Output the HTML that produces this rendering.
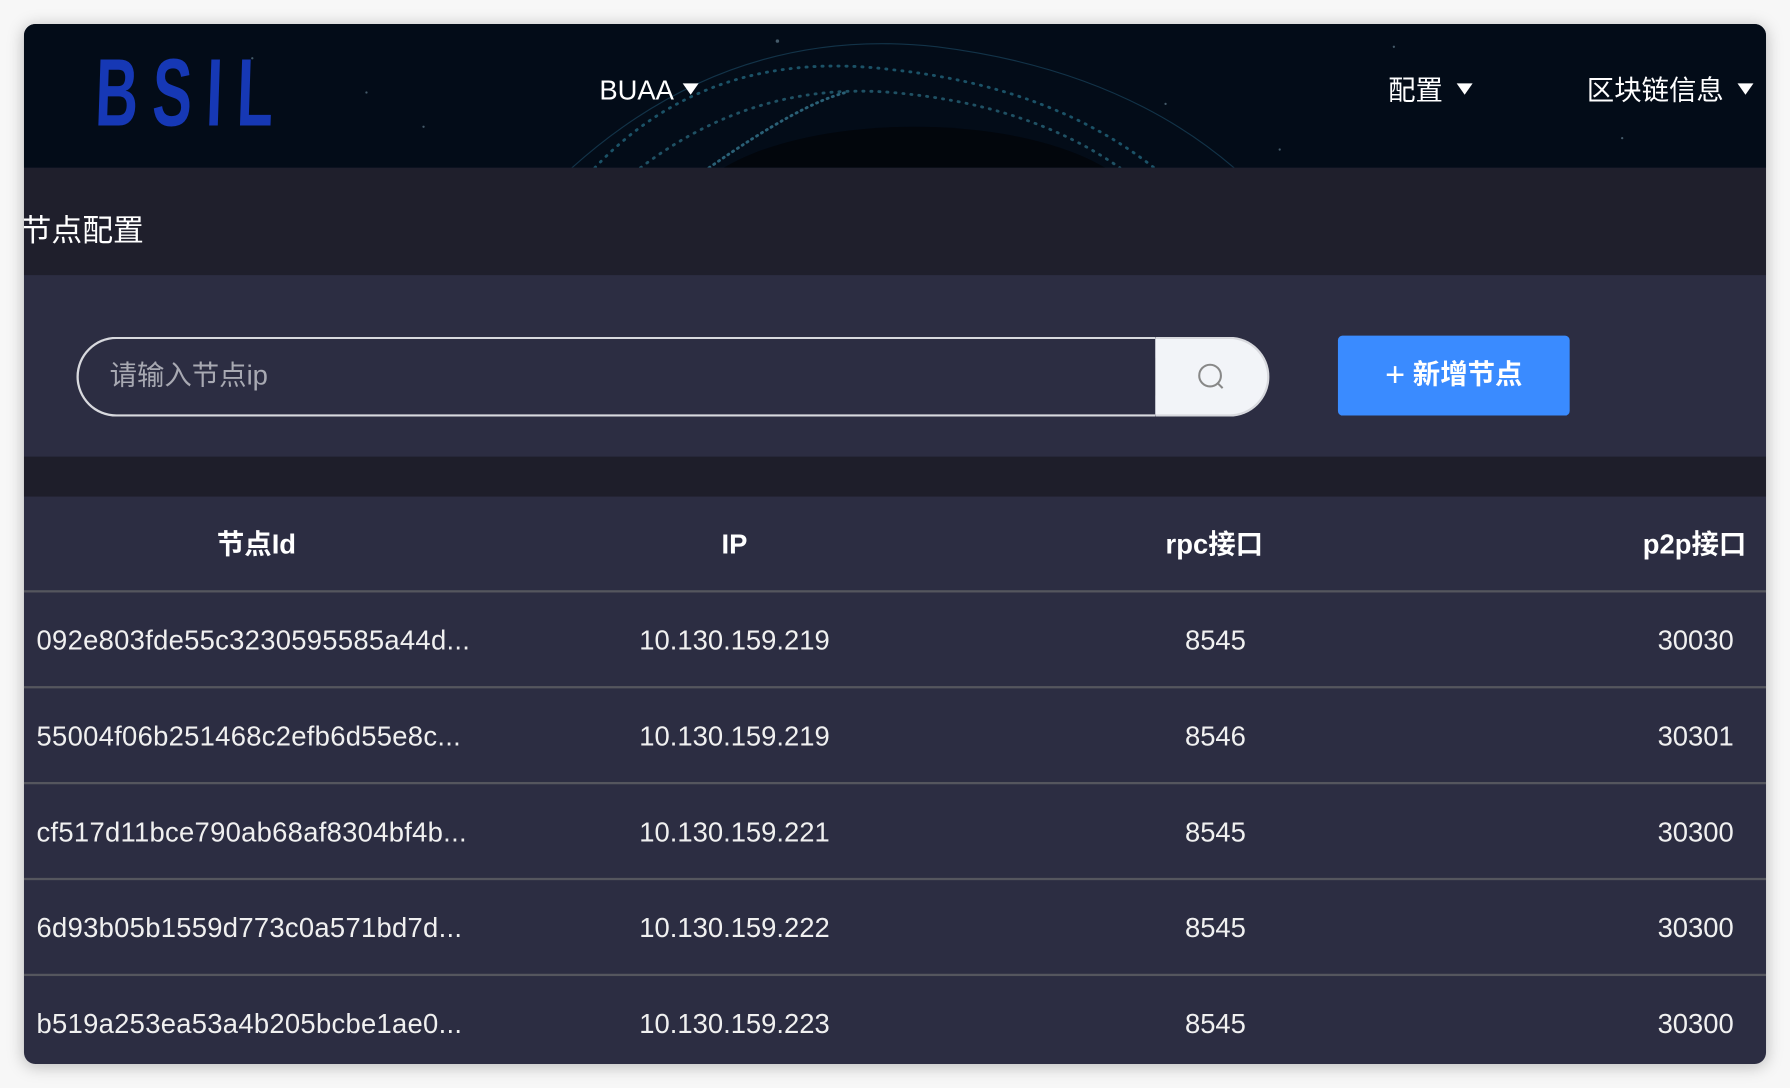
<!DOCTYPE html>
<html><head><meta charset="utf-8"><style>
html,body{margin:0;padding:0;width:1790px;height:1088px;overflow:hidden;background:#f7f7f7;font-family:"Liberation Sans","Noto Sans CJK SC",sans-serif;}
#s{position:absolute;left:0;top:0;width:1568px;height:953px;transform:scale(1.14158);transform-origin:0 0;}
.card{position:absolute;left:21px;top:21px;width:1526px;height:911px;border-radius:10px;overflow:hidden;background:#2c2d42;box-shadow:0 2px 14px rgba(0,0,0,.25);}
.hdr{position:absolute;left:0;top:0;width:1526px;height:126px;background:#030c18;overflow:hidden}
.abs{position:absolute;color:#fff;white-space:nowrap;line-height:1}
.nav{font-size:24px;top:47px}
.tri{display:inline-block;width:0;height:0;border-left:7px solid transparent;border-right:7px solid transparent;border-top:10px solid #fff;margin-left:8px;vertical-align:4px}
.logo{left:64px;top:18px;font-size:84px;font-weight:bold;color:#1638b5;letter-spacing:20px;transform:scaleX(0.62) skewX(-3deg);transform-origin:0 0}
.band1{position:absolute;top:126px;left:0;width:1526px;height:94px;background:#1f1f2c}
.band2{position:absolute;top:379px;left:0;width:1526px;height:35px;background:#1e1e2a}
.inp{position:absolute;left:46px;top:274px;width:943px;height:66px;border:2px solid #d8d9de;border-right:none;border-radius:35px 0 0 35px;background:#2c2d42}
.sbtn{position:absolute;left:991px;top:274px;width:98px;height:66px;border:2px solid #d8d9de;border-left:none;border-radius:0 35px 35px 0;background:#f2f4f8}
.add{position:absolute;left:1151px;top:273px;width:203px;height:70px;background:#3a8bff;border-radius:4px;color:#fff;font-size:24px;font-weight:bold;text-align:center;line-height:70px}
.th{font-size:24px;font-weight:bold;top:445px}
.row{position:absolute;left:0;width:1526px;height:84px;border-top:2px solid #55565e}
.td{font-size:24px;color:#f0f0f0}
</style></head><body><div id="s"><div class="card">
<div class="hdr"><svg width="1526" height="126" viewBox="0 0 1526 126">
<ellipse cx="780" cy="170" rx="200" ry="80" fill="#02060c"/>
<g fill="none" stroke-linecap="round">
<path d="M500 126 Q600 20 760 40 Q900 55 990 126" stroke="#3aa8c8" stroke-width="2.5" stroke-dasharray="1 6" opacity=".45"/>
<path d="M540 126 Q640 50 760 60 Q880 70 960 126" stroke="#4bb8d8" stroke-width="2.5" stroke-dasharray="1 6" opacity=".4"/>
<path d="M480 126 Q620 0 800 20 Q960 40 1060 126" stroke="#2a6e90" stroke-width="1" opacity=".4"/>
<path d="M600 126 Q680 70 720 60" stroke="#5bc8e8" stroke-width="2.5" stroke-dasharray="1 4" opacity=".45"/>
</g>
<g fill="#8ab" opacity=".5"><circle cx="200" cy="30" r="1"/><circle cx="350" cy="90" r="1"/><circle cx="660" cy="15" r="1.5"/><circle cx="1000" cy="70" r="1"/><circle cx="1200" cy="20" r="1"/><circle cx="1400" cy="100" r="1"/><circle cx="300" cy="60" r="1"/><circle cx="1100" cy="110" r="1"/></g>
</svg></div>
<div class="abs logo">BSIL</div>
<div class="abs nav" style="left:504px">BUAA<span class="tri"></span></div>
<div class="abs nav" style="left:1195px">配置<span class="tri" style="margin-left:12px"></span></div>
<div class="abs nav" style="left:1369px">区块链信息<span class="tri" style="margin-left:12px"></span></div>
<div class="band1"></div>
<div class="abs" style="left:-3px;top:168px;font-size:27px">节点配置</div>
<div class="inp"></div>
<div class="abs" style="left:75px;top:297px;font-size:24px;color:#a8a9b2">请输入节点ip</div>
<div class="sbtn"><svg width="98" height="66" viewBox="0 0 98 66"><circle cx="48" cy="32" r="9.5" fill="none" stroke="#888" stroke-width="1.8"/><line x1="55" y1="39" x2="59" y2="43" stroke="#888" stroke-width="1.8"/></svg></div>
<div class="add"><span style="font-weight:normal;font-size:30px;vertical-align:-2px">+</span> 新增节点</div>
<div class="band2"></div>
<div class="abs th" style="left:169px">节点Id</div>
<div class="abs th" style="left:611px">IP</div>
<div class="abs th" style="left:1000px">rpc接口</div>
<div class="abs th" style="left:1418px">p2p接口</div>
<div class="row" style="top:496px"></div>
<div class="row" style="top:580px"></div>
<div class="row" style="top:664px"></div>
<div class="row" style="top:748px"></div>
<div class="row" style="top:832px"></div>
<div class="abs td" style="left:11px;top:529px;letter-spacing:0.25px">092e803fde55c3230595585a44d...</div>
<div class="abs td" style="left:539px;top:529px">10.130.159.219</div>
<div class="abs td" style="left:1017px;top:529px">8545</div>
<div class="abs td" style="left:1431px;top:529px">30030</div>
<div class="abs td" style="left:11px;top:613px;letter-spacing:0.25px">55004f06b251468c2efb6d55e8c...</div>
<div class="abs td" style="left:539px;top:613px">10.130.159.219</div>
<div class="abs td" style="left:1017px;top:613px">8546</div>
<div class="abs td" style="left:1431px;top:613px">30301</div>
<div class="abs td" style="left:11px;top:697px;letter-spacing:0.25px">cf517d11bce790ab68af8304bf4b...</div>
<div class="abs td" style="left:539px;top:697px">10.130.159.221</div>
<div class="abs td" style="left:1017px;top:697px">8545</div>
<div class="abs td" style="left:1431px;top:697px">30300</div>
<div class="abs td" style="left:11px;top:781px;letter-spacing:0.25px">6d93b05b1559d773c0a571bd7d...</div>
<div class="abs td" style="left:539px;top:781px">10.130.159.222</div>
<div class="abs td" style="left:1017px;top:781px">8545</div>
<div class="abs td" style="left:1431px;top:781px">30300</div>
<div class="abs td" style="left:11px;top:865px;letter-spacing:0.25px">b519a253ea53a4b205bcbe1ae0...</div>
<div class="abs td" style="left:539px;top:865px">10.130.159.223</div>
<div class="abs td" style="left:1017px;top:865px">8545</div>
<div class="abs td" style="left:1431px;top:865px">30300</div>
</div></div></body></html>
